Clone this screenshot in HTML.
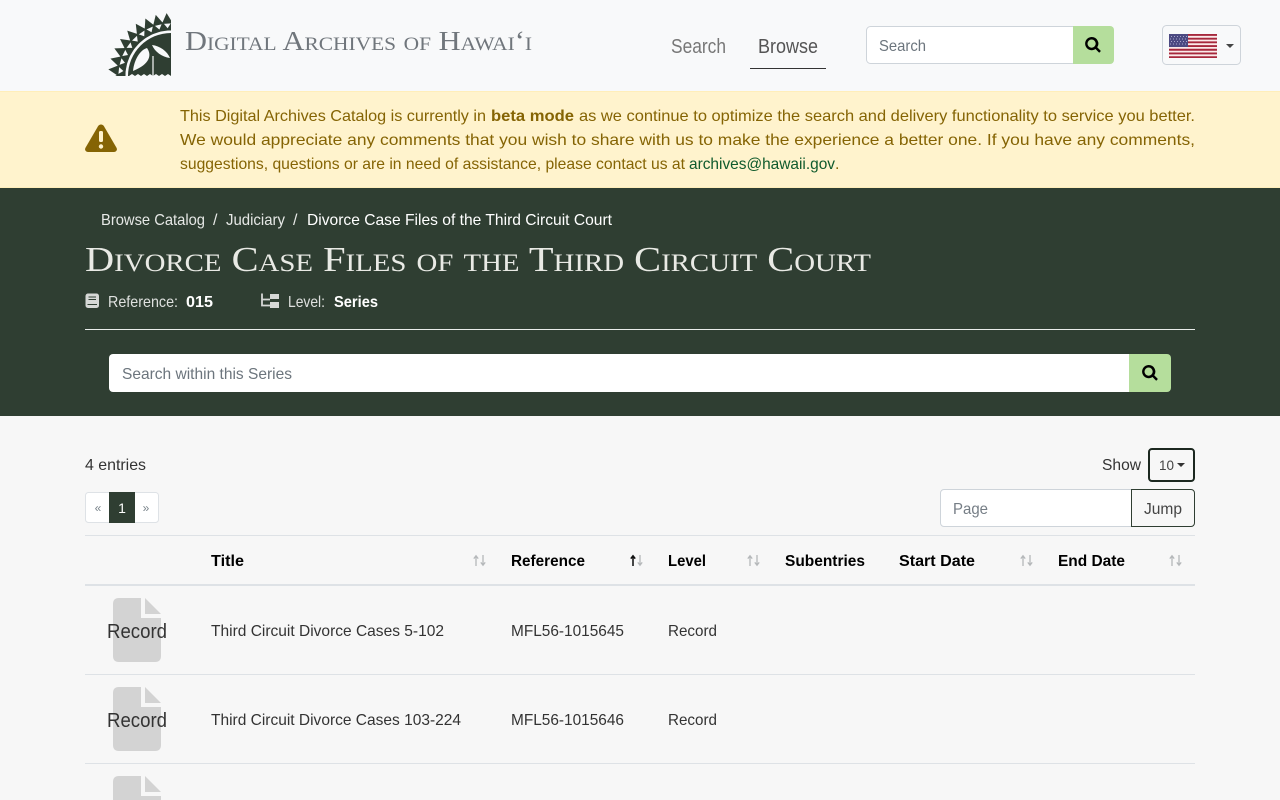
<!DOCTYPE html>
<html lang="en">
<head>
<meta charset="utf-8">
<title>Divorce Case Files of the Third Circuit Court</title>
<style>
html,body{margin:0;padding:0;width:1280px;height:800px;overflow:hidden;background:#f7f7f7}
svg{display:block}
text{font-family:"Liberation Sans",sans-serif;font-size:16px;white-space:pre}
.sc{font-family:"Liberation Serif",serif;font-variant:small-caps}
.b{font-weight:700}
</style>
</head>
<body>
<svg width="1280" height="800" viewBox="0 0 1280 800" xmlns="http://www.w3.org/2000/svg">
<defs>
<clipPath id="q"><rect x="100" y="10" width="71" height="66"/></clipPath>
<polygon id="t1" points="108,76 118.500,70.500 118.500,81.500"/>
<polygon id="t2" points="116.500,76 125.500,70.500 125.500,81.500"/>
<g id="arrows">
<path d="M4 12V2M1.800 4.600 4 1.800 6.200 4.600" fill="none" stroke="#b5b8ba" stroke-width="1.300"/>
<path d="M11 1V11M8.800 8.400 11 11.200 13.200 8.400" fill="none" stroke="#b5b8ba" stroke-width="1.300"/>
</g>
<g id="doc">
<path d="M6 0H28V20H48V58Q48 64 42 64H6Q0 64 0 58V6Q0 0 6 0Z" fill="#d3d3d3"/>
<path d="M32 0 48 16H32Z" fill="#d3d3d3"/>
</g>
<path id="mag" d="M6.600 0a6.600 6.600 0 1 0 3.900 12l3.700 3.700 1.700-1.700-3.700-3.700A6.600 6.600 0 0 0 6.600 0zm0 2.500a4.100 4.100 0 1 1 0 8.200 4.100 4.100 0 0 1 0-8.200z" fill="#000"/>
</defs>

<!-- header -->
<rect width="1280" height="91" fill="#f8f9fa"/>
<g clip-path="url(#q)" fill="#2f3e32">
<use href="#t1" transform="rotate(-4 171 76)"/><use href="#t1" transform="rotate(6 171 76)"/>
<use href="#t1" transform="rotate(16 171 76)"/><use href="#t1" transform="rotate(26 171 76)"/>
<use href="#t1" transform="rotate(36 171 76)"/><use href="#t1" transform="rotate(46 171 76)"/>
<use href="#t1" transform="rotate(56 171 76)"/><use href="#t1" transform="rotate(66 171 76)"/>
<use href="#t1" transform="rotate(76 171 76)"/><use href="#t1" transform="rotate(86 171 76)"/>
<use href="#t2" transform="rotate(1 171 76)"/><use href="#t2" transform="rotate(11 171 76)"/>
<use href="#t2" transform="rotate(21 171 76)"/><use href="#t2" transform="rotate(31 171 76)"/>
<use href="#t2" transform="rotate(41 171 76)"/><use href="#t2" transform="rotate(51 171 76)"/>
<use href="#t2" transform="rotate(61 171 76)"/><use href="#t2" transform="rotate(71 171 76)"/>
<use href="#t2" transform="rotate(81 171 76)"/><use href="#t2" transform="rotate(91 171 76)"/>
<circle cx="171" cy="76" r="43"/>
</g>
<path d="M133 71C134 60 140 50 147 48 152 55 150 64 133 71Z" fill="#f8f9fa"/>
<path d="M152 45C160 46 167 51 170 58 162 57 155 52 152 45Z" fill="#f8f9fa"/>
<path d="M153 56V76" stroke="#f8f9fa" stroke-width="1.200"/>
<path d="M129 76l3-2 3 2 3-2 3 2 3-2 3 2 3-2 3 2 3-2 3 2 3-2 3 2 3-2 3 2Z" fill="#f8f9fa"/>
<text class="sc" x="185" y="50" style="font-size:27px" fill="#70767c" textLength="347" lengthAdjust="spacingAndGlyphs">Digital Archives of Hawai‘i</text>

<text x="671" y="53" style="font-size:20px" fill="#777" textLength="55" lengthAdjust="spacingAndGlyphs">Search</text>
<text x="758" y="53" style="font-size:20px" fill="#555" textLength="60" lengthAdjust="spacingAndGlyphs">Browse</text>
<rect x="750" y="68" width="76" height="1" fill="#333"/>

<rect x="866.500" y="26.500" width="210" height="37" rx="4" fill="#fff" stroke="#ced4da"/>
<path d="M1073 26H1110a4 4 0 0 1 4 4V60a4 4 0 0 1-4 4H1073Z" fill="#b5de9c"/>
<use href="#mag" x="1085" y="37"/>
<text x="879" y="51" fill="#6c757d" textLength="47" lengthAdjust="spacingAndGlyphs">Search</text>

<rect x="1162.500" y="25.500" width="78" height="39" rx="4" fill="#f8f9fa" stroke="#ced4da"/>
<rect x="1169" y="34" width="48" height="24" fill="#a6283c"/>
<path d="M1169 36.800h48M1169 40.500h48M1169 44.200h48M1169 47.900h48M1169 51.600h48M1169 55.300h48" stroke="#fbeaea" stroke-width="1.800"/>
<rect x="1169" y="34" width="19" height="13" fill="#4c4a82"/>
<path d="M1171 36.500h16M1170 39h17M1171 41.500h16M1170 44h17" stroke="#a9a8cc" stroke-width="1" stroke-dasharray="1 2"/>
<path d="M1226 44h8l-4 4Z" fill="#444"/>

<!-- alert -->
<rect y="91" width="1280" height="97" fill="#fff3cd"/>
<rect y="91" width="1280" height="1" fill="#ffeeba"/>
<rect y="187" width="1280" height="1" fill="#ffeeba"/>
<path d="M101 124.500c1.300 0 2.300.7 3 1.800l12.500 21.500c1.200 2.100-.3 4.200-2.500 4.200H88c-2.200 0-3.700-2.100-2.500-4.200L98 126.300c.7-1.100 1.700-1.800 3-1.800z" fill="#856404"/>
<rect x="99" y="131" width="4" height="11" rx="1.500" fill="#fff3cd"/>
<circle cx="101" cy="146.500" r="2.200" fill="#fff3cd"/>
<g fill="#856404">
<text x="180" y="121" textLength="306" lengthAdjust="spacingAndGlyphs">This Digital Archives Catalog is currently in</text>
<text class="b" x="491" y="121" textLength="83" lengthAdjust="spacingAndGlyphs">beta mode</text>
<text x="579" y="121" textLength="616" lengthAdjust="spacingAndGlyphs">as we continue to optimize the search and delivery functionality to service you better.</text>
<text x="180" y="145" textLength="1015" lengthAdjust="spacingAndGlyphs">We would appreciate any comments that you wish to share with us to make the experience a better one. If you have any comments,</text>
<text x="180" y="169" textLength="505" lengthAdjust="spacingAndGlyphs">suggestions, questions or are in need of assistance, please contact us at</text>
<text x="835" y="169">.</text>
</g>
<text x="689" y="169" fill="#0f5a2c" textLength="146" lengthAdjust="spacingAndGlyphs">archives@hawaii.gov</text>

<!-- band -->
<rect y="188" width="1280" height="228" fill="#2f3e32"/>
<g fill="#e6e8e6">
<text x="101" y="225" textLength="104" lengthAdjust="spacingAndGlyphs">Browse Catalog</text>
<text x="213" y="225">/</text>
<text x="226" y="225" textLength="59" lengthAdjust="spacingAndGlyphs">Judiciary</text>
<text x="293" y="225">/</text>
</g>
<text x="307" y="225" fill="#fff" textLength="305" lengthAdjust="spacingAndGlyphs">Divorce Case Files of the Third Circuit Court</text>
<text class="sc" x="85" y="271" style="font-size:35px" fill="#e9eae5" textLength="786" lengthAdjust="spacingAndGlyphs">Divorce Case Files of the Third Circuit Court</text>

<rect x="85.500" y="293.500" width="13.500" height="14.500" rx="2.500" fill="#d6d8d6"/>
<path d="M88.500 297H96M88.500 299.500H96M87.500 304.500H97" stroke="#2f3e32" stroke-width="1"/>
<text x="108" y="307" fill="#dfe1df" textLength="70" lengthAdjust="spacingAndGlyphs">Reference:</text>
<text class="b" x="186" y="307" fill="#fff" textLength="27" lengthAdjust="spacingAndGlyphs">015</text>
<path d="M262 293.500V305.500H270M262 299.500H270" fill="none" stroke="#d6d8d6" stroke-width="1.800"/>
<rect x="270" y="294" width="9" height="5" fill="#d6d8d6"/>
<rect x="270" y="302" width="9" height="6" fill="#d6d8d6"/>
<text x="288" y="307" fill="#dfe1df" textLength="37" lengthAdjust="spacingAndGlyphs">Level:</text>
<text class="b" x="334" y="307" fill="#fff" textLength="44" lengthAdjust="spacingAndGlyphs">Series</text>
<rect x="85" y="329" width="1110" height="1" fill="#e9ecea"/>

<path d="M113 354H1130V392H113a4 4 0 0 1-4-4V358a4 4 0 0 1 4-4Z" fill="#fff"/>
<path d="M1129 354H1167a4 4 0 0 1 4 4V388a4 4 0 0 1-4 4H1129Z" fill="#b5de9c"/>
<use href="#mag" x="1142" y="365"/>
<text x="122" y="379" fill="#6c757d" textLength="170" lengthAdjust="spacingAndGlyphs">Search within this Series</text>

<!-- controls -->
<text x="85" y="470" fill="#333" textLength="61" lengthAdjust="spacingAndGlyphs">4 entries</text>
<text x="1102" y="470" fill="#333" textLength="39" lengthAdjust="spacingAndGlyphs">Show</text>
<rect x="1149" y="449" width="45" height="32" rx="3" fill="#f7f7f7" stroke="#1c2820" stroke-width="2"/>
<text x="1159" y="470" style="font-size:14px" fill="#444" textLength="15" lengthAdjust="spacingAndGlyphs">10</text>
<path d="M1177 463h8l-4 4Z" fill="#333"/>

<rect x="85.500" y="492.500" width="73" height="30" rx="3" fill="#fff" stroke="#dee2e6"/>
<rect x="109" y="492" width="26" height="31" fill="#2f3e32"/>
<text x="98" y="512" text-anchor="middle" style="font-size:12px" fill="#7b858c">«</text>
<text x="122" y="513" text-anchor="middle" style="font-size:14px" fill="#fff">1</text>
<text x="146" y="512" text-anchor="middle" style="font-size:12px" fill="#7b858c">»</text>

<path d="M1131.500 489.500H944a3.500 3.500 0 0 0-3.500 3.500V523a3.500 3.500 0 0 0 3.500 3.500H1131.500Z" fill="#fff" stroke="#ced4da"/>
<text x="953" y="514" fill="#757d85" textLength="35" lengthAdjust="spacingAndGlyphs">Page</text>
<path d="M1131.500 489.500H1191a3.500 3.500 0 0 1 3.500 3.500V523a3.500 3.500 0 0 1-3.500 3.500H1131.500Z" fill="#f7f7f7" stroke="#2f3e32"/>
<text x="1144" y="514" fill="#444" textLength="38" lengthAdjust="spacingAndGlyphs">Jump</text>

<!-- table -->
<rect x="85" y="535" width="1110" height="1" fill="#dee2e6"/>
<rect x="85" y="584" width="1110" height="2" fill="#dee2e6"/>
<rect x="85" y="674" width="1110" height="1" fill="#dee2e6"/>
<rect x="85" y="763" width="1110" height="1" fill="#dee2e6"/>
<g fill="#000">
<text class="b" x="211" y="566" textLength="33" lengthAdjust="spacingAndGlyphs">Title</text>
<text class="b" x="511" y="566" textLength="74" lengthAdjust="spacingAndGlyphs">Reference</text>
<text class="b" x="668" y="566" textLength="38" lengthAdjust="spacingAndGlyphs">Level</text>
<text class="b" x="785" y="566" textLength="80" lengthAdjust="spacingAndGlyphs">Subentries</text>
<text class="b" x="899" y="566" textLength="76" lengthAdjust="spacingAndGlyphs">Start Date</text>
<text class="b" x="1058" y="566" textLength="67" lengthAdjust="spacingAndGlyphs">End Date</text>
</g>
<use href="#arrows" x="472" y="554"/>
<use href="#arrows" x="629" y="554"/>
<path d="M633 566V556M630.800 558.600 633 555.800 635.200 558.600" fill="none" stroke="#111" stroke-width="1.500"/>
<use href="#arrows" x="746" y="554"/>
<use href="#arrows" x="1019" y="554"/>
<use href="#arrows" x="1168" y="554"/>

<use href="#doc" x="113" y="598"/>
<use href="#doc" x="113" y="687"/>
<use href="#doc" x="113" y="776"/>
<g fill="#333">
<text x="107" y="638" style="font-size:20px" textLength="60" lengthAdjust="spacingAndGlyphs">Record</text>
<text x="211" y="636" textLength="233" lengthAdjust="spacingAndGlyphs">Third Circuit Divorce Cases 5-102</text>
<text x="511" y="636" textLength="113" lengthAdjust="spacingAndGlyphs">MFL56-1015645</text>
<text x="668" y="636" textLength="49" lengthAdjust="spacingAndGlyphs">Record</text>
<text x="107" y="727" style="font-size:20px" textLength="60" lengthAdjust="spacingAndGlyphs">Record</text>
<text x="211" y="725" textLength="250" lengthAdjust="spacingAndGlyphs">Third Circuit Divorce Cases 103-224</text>
<text x="511" y="725" textLength="113" lengthAdjust="spacingAndGlyphs">MFL56-1015646</text>
<text x="668" y="725" textLength="49" lengthAdjust="spacingAndGlyphs">Record</text>
</g>
</svg>
</body>
</html>
